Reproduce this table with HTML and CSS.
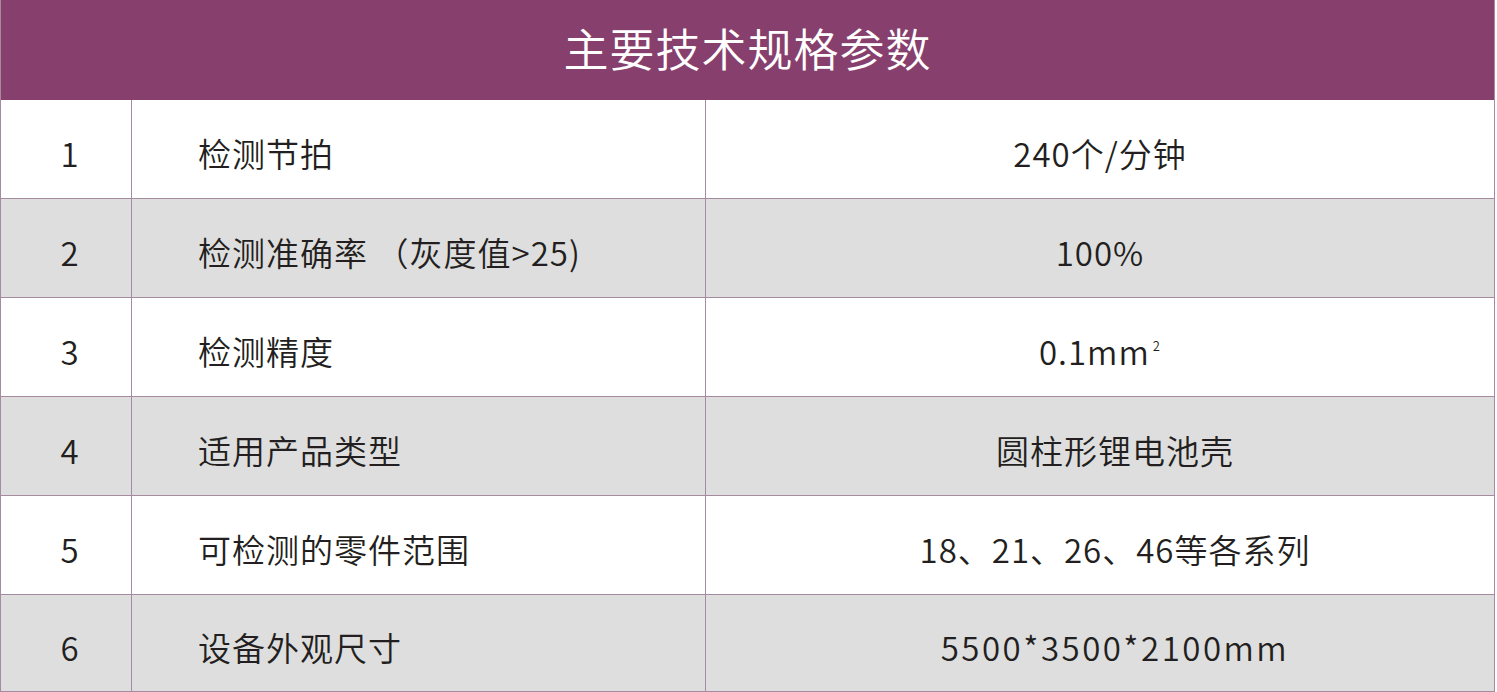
FILE: index.html
```html
<!DOCTYPE html>
<html lang="zh">
<head>
<meta charset="utf-8">
<link rel="stylesheet" href="styles.css">
</head>
<body>
<div class="spec">
  <div class="title">主要技术规格参数</div>
  <div class="row">
    <div class="c-num">1</div>
    <div class="c-name">检测节拍</div>
    <div class="c-val">240个/分钟</div>
  </div>
  <div class="row alt">
    <div class="c-num">2</div>
    <div class="c-name">检测准确率&#8201;（灰度值&gt;25)</div>
    <div class="c-val">100%</div>
  </div>
  <div class="row">
    <div class="c-num">3</div>
    <div class="c-name">检测精度</div>
    <div class="c-val">0.1mm<sup class="sq">2</sup></div>
  </div>
  <div class="row alt">
    <div class="c-num">4</div>
    <div class="c-name">适用产品类型</div>
    <div class="c-val shift">圆柱形锂电池壳</div>
  </div>
  <div class="row">
    <div class="c-num">5</div>
    <div class="c-name">可检测的零件范围</div>
    <div class="c-val shift">18、21、26、46等各系列</div>
  </div>
  <div class="row alt last">
    <div class="c-num">6</div>
    <div class="c-name">设备外观尺寸</div>
    <div class="c-val shift wide">5500*3500*2100mm</div>
  </div>
</div>
</body>
</html>
```

FILE: styles.css
```css
html, body {
  margin: 0;
  padding: 0;
  background: #ffffff;
}
body {
  font-family: "Noto Sans CJK SC", "Noto Sans", sans-serif;
  color: #231f20;
}
.spec {
  width: 1495px;
  height: 692px;
  display: flex;
  flex-direction: column;
  box-sizing: border-box;
  border-left: 1px solid #a58aa0;
  border-right: 1px solid #a58aa0;
  border-bottom: 1px solid #a58aa0;
}
.title {
  height: 100px;
  flex: none;
  background: #873f6d;
  color: #ffffff;
  font-size: 45px;
  font-weight: 350;
  display: flex;
  align-items: center;
  justify-content: center;
  padding-bottom: 6px;
  box-sizing: border-box;
  letter-spacing: 1px;
}
.row {
  height: 99px;
  flex: none;
  box-sizing: border-box;
  display: grid;
  grid-template-columns: 131px 574px 1fr;
  border-bottom: 1px solid #a58aa0;
  background: #ffffff;
  font-size: 33px;
  font-weight: 350;
  letter-spacing: 1px;
}
.row.last {
  flex: 1;
  height: auto;
  border-bottom: none;
}
.row.alt {
  background: #dedede;
}
.c-num, .c-name, .c-val {
  display: flex;
  align-items: center;
  padding-top: 8px;
}
.c-num {
  justify-content: center;
  padding-left: 8px;
  border-right: 1px solid #a58aa0;
}
.c-name {
  padding-left: 66px;
  border-right: 1px solid #a58aa0;
}
.c-val {
  justify-content: center;
}
.c-val.shift {
  padding-left: 30px;
}
.sq {
  font-size: 13px;
  align-self: flex-start;
  margin-top: 30px;
  margin-left: 3px;
}
.wide {
  letter-spacing: 2.5px;
}
```
